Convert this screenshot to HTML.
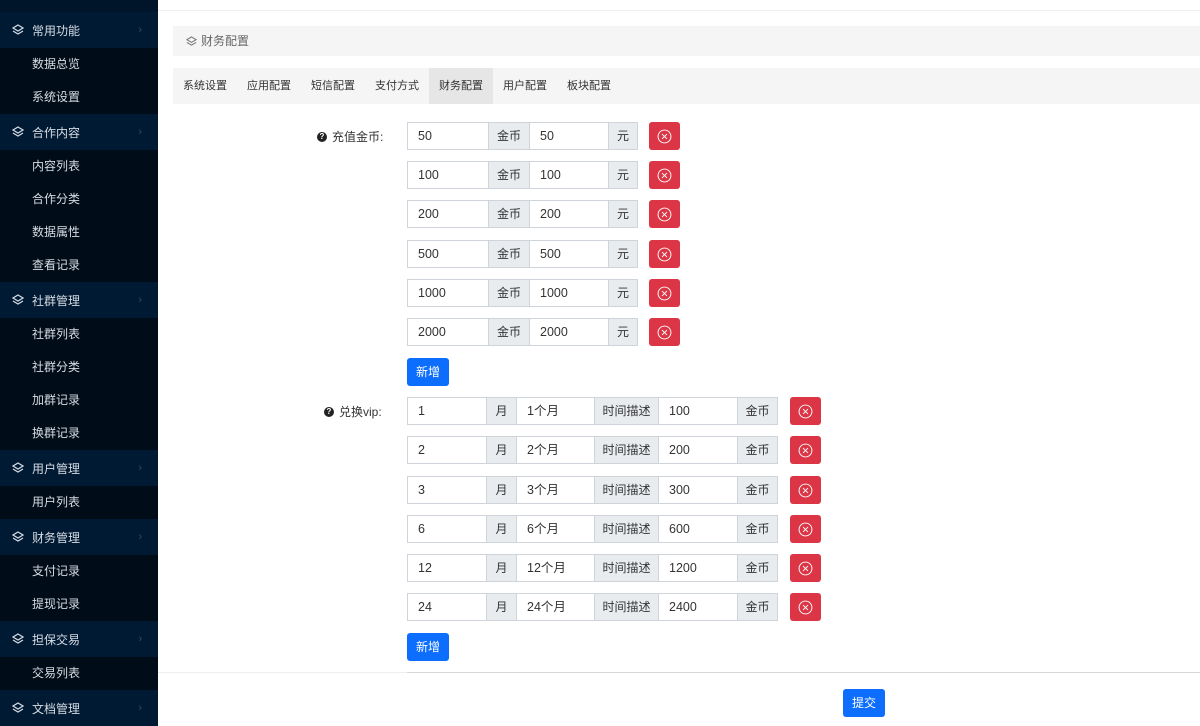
<!DOCTYPE html>
<html><head><meta charset="utf-8"><style>
*{box-sizing:border-box;margin:0;padding:0}
body{width:1200px;height:721px;overflow:hidden;background:#fff;font-family:"Liberation Sans","Noto Sans CJK SC",sans-serif;font-size:12px;color:#333;position:relative}
#side{position:absolute;left:0;top:0;width:158px;height:721px;background:#000c17}
#side .top{height:12px;background:#001529}
.h{height:36px;background:#001a33;color:#d6dce4;display:flex;align-items:center;padding-left:12px;position:relative}
.h svg{margin-right:8px}
.h .ar{position:absolute;right:16px;color:#3a4a60;font-size:11px}
.s{height:33px;line-height:33px;padding-left:32px;color:#d6dce4;background:#000c17}
.a{position:absolute}
.inp{position:absolute;height:28px;border:1px solid #ced4da;background:#fff;line-height:26px;padding-left:10px;color:#333;font-size:12.5px}
.ad{position:absolute;height:28px;border:1px solid #ced4da;background:#e9ecef;line-height:26px;text-align:center;color:#333}
.del{position:absolute;width:31px;height:28px;background:#dc3545;border-radius:3px;display:flex;align-items:center;justify-content:center}
.btn{position:absolute;width:42px;height:28px;background:#0d6efd;color:#fff;border-radius:3px;line-height:28px;text-align:center}
.tab{width:64px;line-height:36px;text-align:center;font-size:11px}
</style></head><body>
<div id="side">
<div class="top"></div>
<div class="h"><svg width="12" height="12" viewBox="0 0 12 12"><path d="M6 1L11 4 6 7 1 4Z M1 7l5 3 5-3" fill="none" stroke="#d6dce4" stroke-width="1.2"/></svg>常用功能<span class="ar">›</span></div>
<div class="s">数据总览</div><div class="s">系统设置</div>
<div class="h"><svg width="12" height="12" viewBox="0 0 12 12"><path d="M6 1L11 4 6 7 1 4Z M1 7l5 3 5-3" fill="none" stroke="#d6dce4" stroke-width="1.2"/></svg>合作内容<span class="ar">›</span></div>
<div class="s">内容列表</div><div class="s">合作分类</div><div class="s">数据属性</div><div class="s">查看记录</div>
<div class="h"><svg width="12" height="12" viewBox="0 0 12 12"><path d="M6 1L11 4 6 7 1 4Z M1 7l5 3 5-3" fill="none" stroke="#d6dce4" stroke-width="1.2"/></svg>社群管理<span class="ar">›</span></div>
<div class="s">社群列表</div><div class="s">社群分类</div><div class="s">加群记录</div><div class="s">换群记录</div>
<div class="h"><svg width="12" height="12" viewBox="0 0 12 12"><path d="M6 1L11 4 6 7 1 4Z M1 7l5 3 5-3" fill="none" stroke="#d6dce4" stroke-width="1.2"/></svg>用户管理<span class="ar">›</span></div>
<div class="s">用户列表</div>
<div class="h"><svg width="12" height="12" viewBox="0 0 12 12"><path d="M6 1L11 4 6 7 1 4Z M1 7l5 3 5-3" fill="none" stroke="#d6dce4" stroke-width="1.2"/></svg>财务管理<span class="ar">›</span></div>
<div class="s">支付记录</div><div class="s">提现记录</div>
<div class="h"><svg width="12" height="12" viewBox="0 0 12 12"><path d="M6 1L11 4 6 7 1 4Z M1 7l5 3 5-3" fill="none" stroke="#d6dce4" stroke-width="1.2"/></svg>担保交易<span class="ar">›</span></div>
<div class="s">交易列表</div>
<div class="h"><svg width="12" height="12" viewBox="0 0 12 12"><path d="M6 1L11 4 6 7 1 4Z M1 7l5 3 5-3" fill="none" stroke="#d6dce4" stroke-width="1.2"/></svg>文档管理<span class="ar">›</span></div>
</div>
<div class="a" style="left:158px;top:10px;width:1042px;height:1px;background:#eee"></div>
<div class="a" style="left:173px;top:26px;width:1027px;height:30px;background:#f5f5f5;color:#666;line-height:30px;padding-left:13px;display:flex;align-items:center"><svg width="11" height="11" viewBox="0 0 12 12" style="margin-right:4px"><path d="M6 1L11 4 6 7 1 4Z M1 7l5 3 5-3" fill="none" stroke="#777" stroke-width="1.2"/></svg>财务配置</div>
<div class="a" style="left:173px;top:68px;width:1027px;height:36px;background:#f5f5f5;display:flex;color:#333">
<div class="tab">系统设置</div><div class="tab">应用配置</div><div class="tab">短信配置</div><div class="tab">支付方式</div><div class="tab" style="background:#e6e6e6">财务配置</div><div class="tab">用户配置</div><div class="tab">板块配置</div>
</div>
<div class="a" style="left:317px;top:128px;font-size:12px;display:flex;align-items:center"><span style="display:inline-block;width:10px;height:10px;border-radius:50%;background:#222;color:#fff;font-size:8px;line-height:10px;text-align:center;margin-right:5px;font-weight:bold">?</span>充值金币:</div>
<div class="a" style="left:324px;top:403px;font-size:12px;display:flex;align-items:center"><span style="display:inline-block;width:10px;height:10px;border-radius:50%;background:#222;color:#fff;font-size:8px;line-height:10px;text-align:center;margin-right:5px;font-weight:bold">?</span>兑换vip:</div>
<div id="rows"></div>
<div class="btn" style="left:407px;top:358px">新增</div>
<div class="btn" style="left:407px;top:633px">新增</div>
<div class="a" style="left:158px;top:672px;width:1042px;height:1px;background:#eee"></div>
<div class="a" style="left:407px;top:672px;width:793px;height:1px;background:#d8d8d8"></div>
<div class="btn" style="left:843px;top:689px">提交</div>
<script>
var x='<svg width="15" height="15" viewBox="0 0 14 14"><circle cx="7" cy="7" r="6" fill="none" stroke="#fff" stroke-width="0.9"/><path d="M4.7 4.7l4.6 4.6M9.3 4.7l-4.6 4.6" stroke="#fff" stroke-width="0.9"/></svg>';
var h='',a=[50,100,200,500,1000,2000],ys=[122,161,200,240,279,318];
for(var i=0;i<6;i++){var y=ys[i];
h+='<div class="inp" style="left:407px;top:'+y+'px;width:82px">'+a[i]+'</div><div class="ad" style="left:488px;top:'+y+'px;width:42px">金币</div><div class="inp" style="left:529px;top:'+y+'px;width:80px">'+a[i]+'</div><div class="ad" style="left:608px;top:'+y+'px;width:30px">元</div><div class="del" style="left:649px;top:'+y+'px">'+x+'</div>';}
var m=[1,2,3,6,12,24],vy=[397,436,476,515,554,593];
for(var i=0;i<6;i++){var y=vy[i];
h+='<div class="inp" style="left:407px;top:'+y+'px;width:80px">'+m[i]+'</div><div class="ad" style="left:486px;top:'+y+'px;width:31px">月</div><div class="inp" style="left:516px;top:'+y+'px;width:79px">'+m[i]+'个月</div><div class="ad" style="left:594px;top:'+y+'px;width:65px">时间描述</div><div class="inp" style="left:658px;top:'+y+'px;width:80px">'+(m[i]*100)+'</div><div class="ad" style="left:737px;top:'+y+'px;width:41px">金币</div><div class="del" style="left:790px;top:'+y+'px">'+x+'</div>';}
document.getElementById('rows').innerHTML=h;
</script>
</body></html>
